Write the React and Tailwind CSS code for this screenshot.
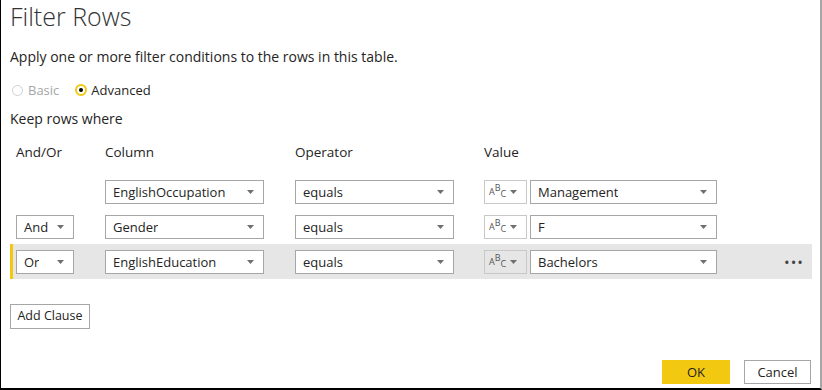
import { useState } from 'react';

function Caret() {
  return (
    <svg width="7" height="4" viewBox="0 0 7 4" className="shrink-0">
      <path d="M0 0h7L3.5 4z" fill="#6f6f6f" />
    </svg>
  );
}

function Select({ value, width }) {
  return (
    <div className={`flex h-[24px] items-center justify-between border border-[#a6a6a6] bg-white pl-[7px] pr-[9px] ${width}`}>
      <span className="truncate text-[13px] leading-[18px] text-[#252423]">{value}</span>
      <Caret />
    </div>
  );
}

function TypeButton() {
  return (
    <div className="flex h-[24px] w-[43px] items-center justify-between border border-[#c8c8c8] pl-[4px] pr-[9px]">
      <span className="relative text-[9px] leading-[12px] text-[#555]">
        A<span className="relative -top-[4px]">B</span><span className="relative top-[2px]">C</span>
      </span>
      <Caret />
    </div>
  );
}

function ClauseRow({ join, column, value, active }) {
  return (
    <div className={`flex h-[35px] items-center ${active ? 'border-l-[3px] border-[#f2c811] bg-[#e6e6e6] pl-[3px]' : 'pl-[6px]'}`}>
      <div className="w-[89px]">
        {join && <Select value={join} width="w-[58px]" />}
      </div>
      <div className="w-[190px]">
        <Select value={column} width="w-[159px]" />
      </div>
      <div className="w-[189px]">
        <Select value="equals" width="w-[159px]" />
      </div>
      <div className="w-[46px]">
        <TypeButton />
      </div>
      <Select value={value} width="w-[187px]" />
      <div className="flex flex-1 justify-end pr-[8px]">
        {active && <span className="text-[15px] leading-[18px] tracking-[1px] text-[#444]">•••</span>}
      </div>
    </div>
  );
}

export default function App() {
  const [mode, setMode] = useState('advanced');

  const rows = [
    { join: null, column: 'EnglishOccupation', value: 'Management' },
    { join: 'And', column: 'Gender', value: 'F' },
    { join: 'Or', column: 'EnglishEducation', value: 'Bachelors', active: true },
  ];

  return (
    <main
      className="flex h-[390px] w-[822px] flex-col border-b-2 border-l border-r-2 border-b-black border-l-black border-r-[#a6a6a6] bg-white pl-[9px] pr-[8px] text-[#252423]"
      style={{ fontFamily: '"Open Sans", "Noto Sans", sans-serif' }}
    >
      <h1 className="h-[32px] text-[25px] font-light leading-[32px] text-[#333]">Filter Rows</h1>

      <p className="mt-[15px] h-[20px] text-[14px] leading-[20px]">
        Apply one or more filter conditions to the rows in this table.
      </p>

      <div className="mt-[13px] flex h-[20px] items-center text-[13px] leading-[20px]">
        <button className="flex items-center gap-[5px] text-[#a6a6a6]" onClick={() => setMode('basic')}>
          <span className="ml-[2px] h-[11px] w-[11px] rounded-full border border-[#d0d0d0]" />
          Basic
        </button>
        <button className="ml-[16px] flex items-center gap-[4px]" onClick={() => setMode('advanced')}>
          <span className="flex h-[12px] w-[12px] items-center justify-center rounded-full border-2 border-[#f2c811]">
            {mode === 'advanced' && <span className="h-[4px] w-[4px] rounded-full bg-black" />}
          </span>
          Advanced
        </button>
      </div>

      <p className="mt-[9px] h-[20px] text-[14px] leading-[20px]">Keep rows where</p>

      <div className="mt-[13px] flex h-[20px] items-center pl-[6px] text-[13.5px] leading-[20px]">
        <span className="w-[89px]">And/Or</span>
        <span className="w-[190px]">Column</span>
        <span className="w-[189px]">Operator</span>
        <span>Value</span>
      </div>

      <div className="mt-[12px] flex flex-col">
        {rows.map((row) => (
          <ClauseRow key={row.column} {...row} />
        ))}
      </div>

      <div className="mt-[23px]">
        <button className="h-[25px] w-[80px] border border-[#a6a6a6] bg-white text-[12.5px] leading-[18px]">
          Add Clause
        </button>
      </div>

      <div className="mt-auto mb-[4px] flex justify-end gap-[14px] pr-[1px]">
        <button className="h-[24px] w-[68px] bg-[#f2c811] text-[13px] leading-[18px]">OK</button>
        <button className="h-[24px] w-[67px] border border-[#a6a6a6] bg-white text-[13px] leading-[18px]">Cancel</button>
      </div>
    </main>
  );
}
